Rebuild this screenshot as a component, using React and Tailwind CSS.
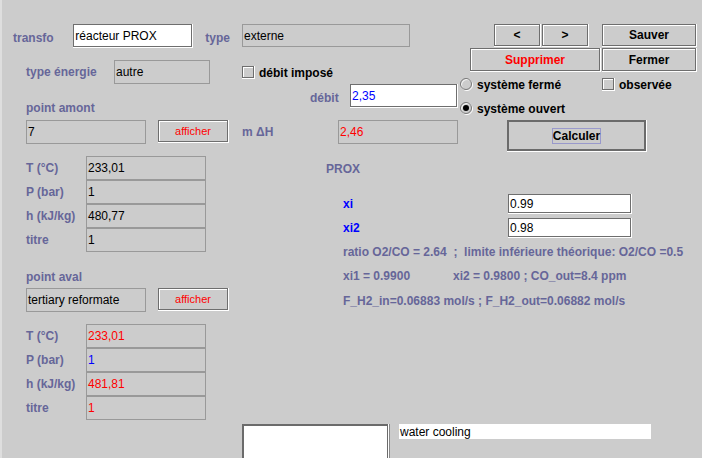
import React from "react";

const lbl = "font-bold text-[12px] leading-[14px] text-[#666699] whitespace-pre";
const txt = "text-[12px] leading-[14px] whitespace-pre";

// Metal-look widgets
const Btn = ({ className, textClass, children }) => (
    <div className={`flex shrink-0 border-r border-b border-white ${className}`}>
        <div className="flex-1 flex items-center justify-center border border-[#6e6e6e] shadow-[inset_1px_1px_0_#fff]">
            <span className={textClass}>{children}</span>
        </div>
    </div>
);

const EditField = ({ className, textClass = "text-black", children }) => (
    <div className={`flex shrink-0 border-r border-b border-white ${className}`}>
        <div className="flex-1 flex items-center pl-[1px] bg-white border border-[#6e6e6e]">
            <span className={`${txt} ${textClass}`}>{children}</span>
        </div>
    </div>
);

const RoField = ({ className, textClass = "text-black", children }) => (
    <div className={`flex shrink-0 items-center pl-[1px] border border-[#999999] ${className}`}>
        <span className={`${txt} ${textClass}`}>{children}</span>
    </div>
);

const Check = ({ className = "" }) => (
    <div className={`flex shrink-0 w-[13px] h-[13px] border-r border-b border-white ${className}`}>
        <div className="flex-1 border border-[#6e6e6e] shadow-[inset_1px_1px_0_#fff]" />
    </div>
);

const Radio = ({ selected }) => (
    <svg width="13" height="13" viewBox="0 0 13 13" className="shrink-0">
        <circle cx="7" cy="7" r="5.5" fill="none" stroke="#ffffff" />
        <circle cx="6" cy="6" r="5.5" fill="none" stroke="#777777" />
        {selected && <circle cx="6" cy="6" r="3" fill="#000000" />}
    </svg>
);

const StateRows = ({ values }) => {
    const labels = ["T (°C)", "P (bar)", "h (kJ/kg)", "titre"];
    return (
        <div className="flex flex-col">
            {labels.map((l, i) => (
                <div key={l} className="flex h-[24px] items-center">
                    <span className={`${lbl} ml-[24px] w-[60px]`}>{l}</span>
                    <RoField className="w-[120px] h-[24px]" textClass={values[i].c}>
                        {values[i].v}
                    </RoField>
                </div>
            ))}
        </div>
    );
};

export default function App() {
    return (
        <div className="w-[702px] h-[458px] bg-[#cccccc] flex overflow-hidden font-['Liberation_Sans',Arial,sans-serif]">
            <div className="w-[2px] shrink-0 bg-[#dedede]" />

            {/* colonne gauche */}
            <div className="w-[228px] shrink-0 flex flex-col pt-[24px]">
                <div className="flex h-[24px] items-start">
                    <span className={`${lbl} ml-[11px] w-[61px] mt-[7px]`}>transfo</span>
                    <EditField className="w-[120px] h-[24px]">réacteur PROX</EditField>
                    <span className={`${lbl} ml-[12px] mt-[7px]`}>type</span>
                </div>

                <div className="flex h-[24px] items-center mt-[12px]">
                    <span className={`${lbl} ml-[24px] w-[88px]`}>type énergie</span>
                    <RoField className="w-[96px] h-[24px]">autre</RoField>
                </div>

                <span className={`${lbl} ml-[24px] mt-[17px] h-[14px]`}>point amont</span>
                <div className="flex h-[24px] items-start mt-[5px]">
                    <RoField className="ml-[24px] w-[120px] h-[24px]">7</RoField>
                    <Btn className="ml-[12px] w-[71px] h-[23px]" textClass="text-[11px] leading-[13px] text-[#ff0000]">
                        afficher
                    </Btn>
                </div>

                <div className="mt-[12px]">
                    <StateRows
                        values={[
                            { v: "233,01", c: "text-black" },
                            { v: "1", c: "text-black" },
                            { v: "480,77", c: "text-black" },
                            { v: "1", c: "text-black" },
                        ]}
                    />
                </div>

                <span className={`${lbl} ml-[24px] mt-[18px] h-[14px]`}>point aval</span>
                <div className="flex h-[24px] items-start mt-[4px]">
                    <RoField className="ml-[24px] w-[120px] h-[24px]">tertiary reformate</RoField>
                    <Btn className="ml-[12px] w-[71px] h-[23px]" textClass="text-[11px] leading-[13px] text-[#ff0000]">
                        afficher
                    </Btn>
                </div>

                <div className="mt-[12px]">
                    <StateRows
                        values={[
                            { v: "233,01", c: "text-[#ff0000]" },
                            { v: "1", c: "text-[#0000ff]" },
                            { v: "481,81", c: "text-[#ff0000]" },
                            { v: "1", c: "text-[#ff0000]" },
                        ]}
                    />
                </div>
            </div>

            {/* partie droite */}
            <div className="w-[472px] shrink-0 flex flex-col">
                <div className="flex h-[152px]">
                    {/* milieu */}
                    <div className="w-[230px] shrink-0 flex flex-col pt-[24px]">
                        <RoField className="ml-[12px] w-[168px] h-[23px]">externe</RoField>

                        <div className="flex h-[13px] items-center mt-[19px]">
                            <Check className="ml-[12px]" />
                            <span className={`${txt} font-bold text-black ml-[4px]`}>débit imposé</span>
                        </div>

                        <div className="flex h-[24px] items-center mt-[5px]">
                            <span className={`${lbl} ml-[80px] w-[40px] mt-[3px]`}>débit</span>
                            <EditField className="w-[108px] h-[24px]" textClass="text-[#0000ff]">2,35</EditField>
                        </div>

                        <div className="flex h-[24px] items-center mt-[12px]">
                            <span className={`${lbl} ml-[12px] w-[96px]`}>m ΔH</span>
                            <RoField className="w-[120px] h-[24px]" textClass="text-[#ff0000]">2,46</RoField>
                        </div>
                    </div>

                    {/* boutons */}
                    <div className="w-[242px] shrink-0 flex flex-col pt-[24px]">
                        <div className="flex h-[23px] ml-[34px]">
                            <Btn className="w-[47px] h-[23px]" textClass={`${txt} font-bold text-black`}>&lt;</Btn>
                            <Btn className="ml-[1px] w-[47px] h-[23px]" textClass={`${txt} font-bold text-black`}>&gt;</Btn>
                            <Btn className="ml-[13px] w-[95px] h-[23px]" textClass={`${txt} font-bold text-black`}>Sauver</Btn>
                        </div>
                        <div className="flex h-[24px] ml-[10px] mt-[1px]">
                            <Btn className="w-[131px] h-[24px]" textClass={`${txt} font-bold text-[#ff0000]`}>Supprimer</Btn>
                            <Btn className="ml-[1px] w-[95px] h-[24px]" textClass={`${txt} font-bold text-black`}>Fermer</Btn>
                        </div>

                        <div className="flex h-[13px] items-center mt-[6px]">
                            <Radio />
                            <span className={`${txt} font-bold text-black ml-[4px] w-[125px]`}>système fermé</span>
                            <Check />
                            <span className={`${txt} font-bold text-black ml-[4px]`}>observée</span>
                        </div>
                        <div className="flex h-[13px] items-center mt-[11px]">
                            <Radio selected />
                            <span className={`${txt} font-bold text-black ml-[4px]`}>système ouvert</span>
                        </div>

                        <div className="flex shrink-0 ml-[47px] mt-[5px] w-[140px] h-[32px] border-r border-b border-white">
                            <div className="flex-1 flex items-center justify-center border-2 border-[#6b6b6b]">
                                <span className={`${txt} font-bold text-black border border-[#9999cc] px-[0px]`}>Calculer</span>
                            </div>
                        </div>
                    </div>
                </div>

                {/* PROX */}
                <span className={`${lbl} ml-[96px] mt-[10px] h-[14px]`}>PROX</span>

                <div className="flex h-[20px] items-center mt-[18px]">
                    <span className={`${lbl} !text-[#0000ff] ml-[113px] w-[165px]`}>xi</span>
                    <EditField className="w-[124px] h-[20px]">0.99</EditField>
                </div>
                <div className="flex h-[20px] items-center mt-[4px]">
                    <span className={`${lbl} !text-[#0000ff] ml-[113px] w-[165px]`}>xi2</span>
                    <EditField className="w-[124px] h-[20px]">0.98</EditField>
                </div>

                <span className={`${lbl} ml-[113px] mt-[7px] h-[14px]`}>
                    ratio O2/CO = 2.64  ;  limite inférieure théorique: O2/CO =0.5
                </span>
                <div className="flex h-[14px] mt-[10px]">
                    <span className={`${lbl} ml-[113px] w-[110px]`}>xi1 = 0.9900</span>
                    <span className={lbl}>xi2 = 0.9800 ; CO_out=8.4 ppm</span>
                </div>
                <span className={`${lbl} ml-[113px] mt-[11px] h-[14px]`}>
                    F_H2_in=0.06883 mol/s ; F_H2_out=0.06882 mol/s
                </span>

                <div className="flex mt-[116px] items-start">
                    <div className="flex shrink-0 ml-[12px] w-[148px] h-[40px] border-r border-[#8a8a8a]">
                        <div className="flex-1 flex border-r border-white">
                            <div className="flex-1 bg-white border-l-2 border-t-2 border-r border-[#6b6b6b]" />
                        </div>
                    </div>
                    <div className="ml-[9px] w-[252px] h-[15px] bg-white flex items-center pl-[1px]">
                        <span className={`${txt} text-black`}>water cooling</span>
                    </div>
                </div>
            </div>
        </div>
    );
}
